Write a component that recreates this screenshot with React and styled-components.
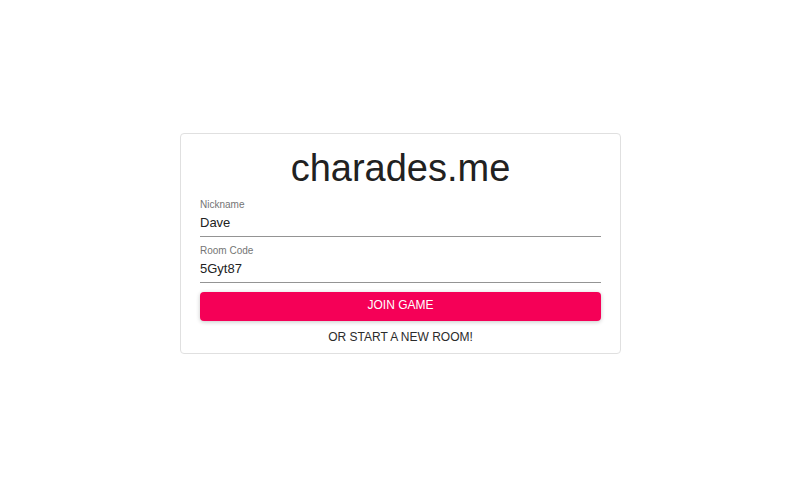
import React from 'react'
import styled, { createGlobalStyle } from 'styled-components'

const GlobalStyle = createGlobalStyle`
    html, body {
        margin: 0;
        padding: 0;
        background: #ffffff;
        font-family: "Liberation Sans", Arial, Helvetica, sans-serif;
    }
`

const Page = styled.div`
    padding-top: 133px;
    display: flex;
    justify-content: center;
`

const Card = styled.div`
    box-sizing: border-box;
    width: 441px;
    margin-right: 5px;
    padding: 11px 19px 2px;
    background: #ffffff;
    border: 1px solid #e0e0e0;
    border-radius: 4px;
    display: flex;
    flex-direction: column;
`

const Title = styled.h1`
    margin: 0 0 7.5px;
    font-size: 38px;
    line-height: 46px;
    font-weight: 400;
    color: #212121;
    text-align: center;
`

const Field = styled.label`
    display: flex;
    flex-direction: column;
    & + & {
        margin-top: 7.5px;
    }
`

const Label = styled.span`
    font-size: 10px;
    line-height: 12px;
    color: #757575;
`

const Input = styled.input`
    border: none;
    border-bottom: 1px solid #949494;
    outline: none;
    padding: 4.5px 0 6px;
    font-family: inherit;
    font-size: 13px;
    line-height: 15px;
    height: 15px;
    color: #222222;
    background: transparent;
`

const Button = styled.button`
    box-sizing: border-box;
    height: ${p => (p.$primary ? '29px' : '30px')};
    margin-top: ${p => (p.$primary ? '9px' : '0')};
    padding: ${p => (p.$primary ? '5px 16px 7px' : '8px 16px 5px')};
    border: none;
    border-radius: 4px;
    font-family: inherit;
    font-size: 12px;
    line-height: 17px;
    text-transform: uppercase;
    cursor: pointer;
    background: ${p => (p.$primary ? '#f50057' : 'transparent')};
    color: ${p => (p.$primary ? '#ffffff' : '#2b2b2b')};
    box-shadow: ${p => (p.$primary ? '0 1px 4px rgba(0,0,0,0.22)' : 'none')};
`

export default function App() {
    return (
        <>
            <GlobalStyle />
            <Page>
                <Card>
                    <Title>charades.me</Title>
                    <Field>
                        <Label>Nickname</Label>
                        <Input defaultValue="Dave" />
                    </Field>
                    <Field>
                        <Label>Room Code</Label>
                        <Input defaultValue="5Gyt87" />
                    </Field>
                    <Button $primary>Join Game</Button>
                    <Button>Or start a new room!</Button>
                </Card>
            </Page>
        </>
    )
}
